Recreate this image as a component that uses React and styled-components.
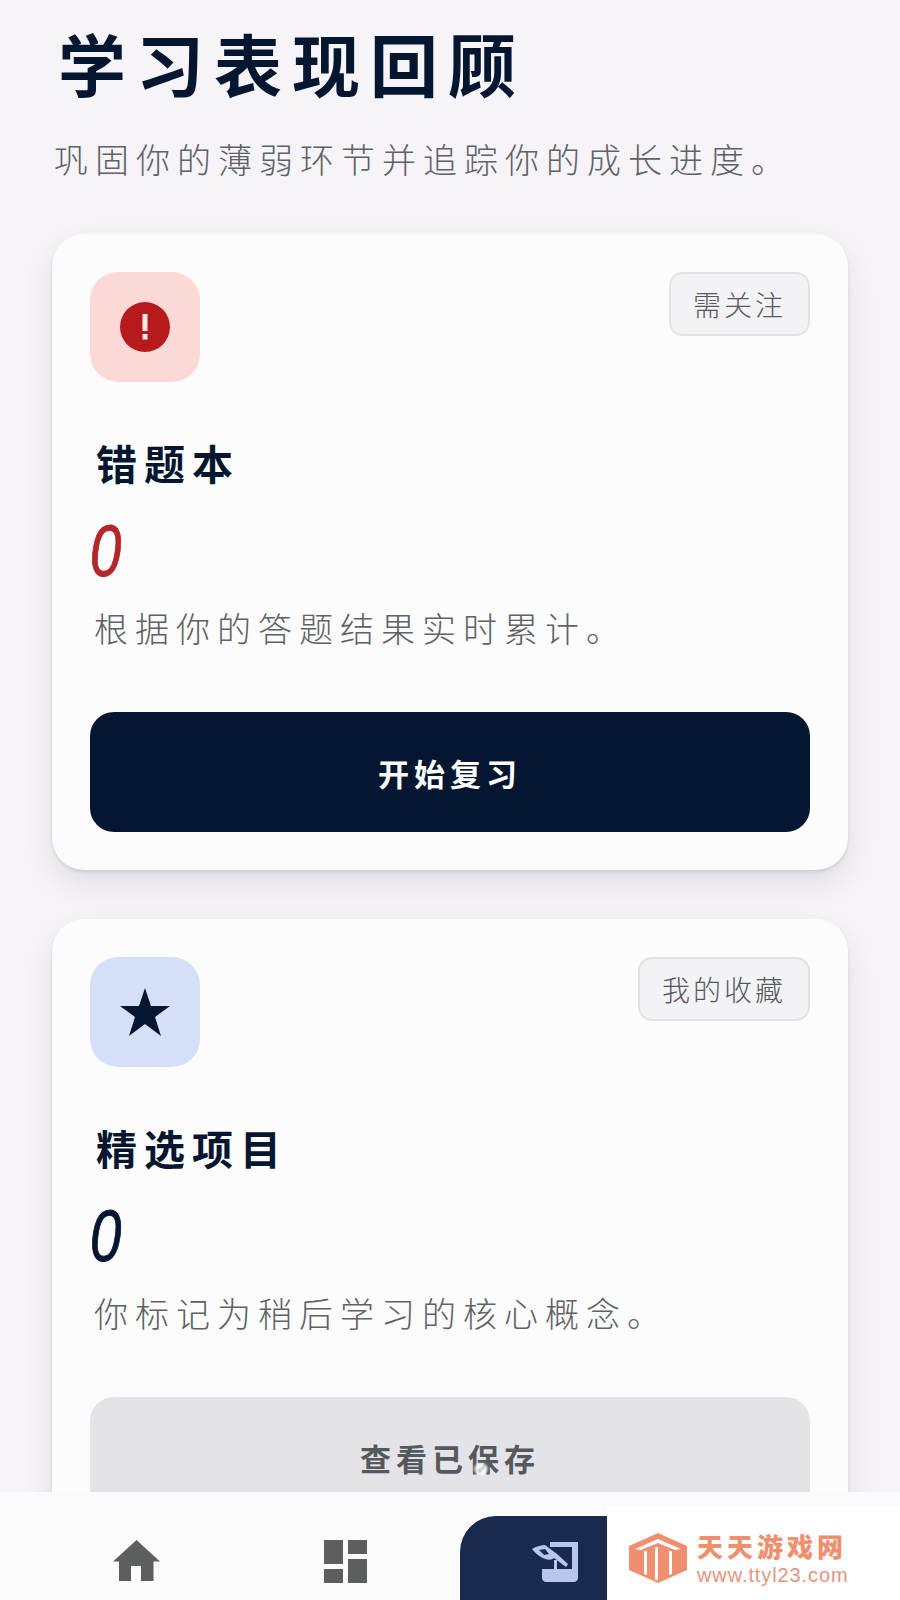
import React from 'react'
import styled, { createGlobalStyle } from 'styled-components'

const GlobalStyle = createGlobalStyle`
  html, body {
    margin: 0;
    padding: 0;
    background: #f6f4f8;
  }
  * {
    box-sizing: border-box;
  }
`

const Screen = styled.div`
  position: relative;
  width: 900px;
  height: 1600px;
  overflow: hidden;
  padding: 17px 52px 0;
  background: #f6f4f8;
  font-family: "Noto Sans CJK SC", "Noto Sans", sans-serif;
`

const PageTitle = styled.h1`
  margin: 0 0 0 6px;
  font-size: 68px;
  line-height: 92px;
  font-weight: 700;
  letter-spacing: 10px;
  color: #041630;
`

const PageSubtitle = styled.p`
  margin: 25px 0 50px 2px;
  font-size: 34px;
  line-height: 50px;
  font-weight: 300;
  letter-spacing: 7px;
  color: #5e6166;
`

const Cards = styled.div`
  display: flex;
  flex-direction: column;
  gap: 49px;
`

const Card = styled.section`
  height: 636px;
  padding: 38px;
  background: #fcfcfd;
  border-radius: 32px;
  box-shadow: 0 2px 3px rgba(30, 30, 50, 0.12), 0 14px 30px rgba(40, 40, 60, 0.1);
`

const CardTop = styled.div`
  display: flex;
  justify-content: space-between;
  align-items: flex-start;
`

const IconBox = styled.div`
  width: 110px;
  height: 110px;
  display: flex;
  align-items: center;
  justify-content: center;
  border-radius: 28px;
  background: ${(p) => p.$bg};
`

const Badge = styled.span`
  height: 64px;
  padding: 0 22px;
  display: flex;
  align-items: center;
  font-size: 28px;
  font-weight: 300;
  letter-spacing: 3px;
  color: #55585d;
  background: #f3f2f5;
  border: 2px solid #e3e2e6;
  border-radius: 14px;
`

const CardTitle = styled.h2`
  margin: 50px 0 0 6px;
  font-size: 41px;
  line-height: 60px;
  font-weight: 700;
  letter-spacing: 7px;
  color: #041630;
`

const Count = styled.div`
  margin: 17px 0 0;
  font-family: "Liberation Sans", sans-serif;
  font-size: 72px;
  line-height: 84px;
  font-style: italic;
  color: ${(p) => p.$color};
  transform: scaleX(0.78);
  transform-origin: left center;
  -webkit-text-stroke: 1px ${(p) => p.$color};
`

const Description = styled.p`
  margin: 10px 0 0 4px;
  font-size: 34px;
  line-height: 50px;
  font-weight: 300;
  letter-spacing: 7px;
  color: #5e6166;
`

const ActionButton = styled.div`
  height: 120px;
  margin-top: 59px;
  display: flex;
  align-items: center;
  justify-content: center;
  font-size: 31px;
  font-weight: 700;
  letter-spacing: 5px;
  border-radius: 24px;
  color: ${(p) => (p.$primary ? '#ffffff' : '#55585d')};
  background: ${(p) => (p.$primary ? '#041630' : '#e4e3e7')};
`

const TouchDot = styled.div`
  position: absolute;
  left: 474px;
  top: 1463px;
  width: 14px;
  height: 12px;
  border-radius: 50%;
  background: rgba(255, 255, 255, 0.75);
  filter: blur(1px);
`

const BottomNav = styled.nav`
  position: absolute;
  left: 0;
  right: 0;
  bottom: 0;
  height: 108px;
  padding-top: 24px;
  display: grid;
  grid-template-columns: 272px 188px 147px 1fr;
  background: #fbfbfc;
`

const NavItem = styled.div`
  display: flex;
  justify-content: center;
  padding-top: 24px;
  color: #5d5f5e;
`

const DashboardNavItem = styled(NavItem)`
  padding-right: 42px;
`

const ActiveNavItem = styled(NavItem)`
  border-radius: 36px 0 0 0;
  padding: 26px 0 0 42px;
  background: #1a2a4c;
  color: #b9c6ec;
`

const Watermark = styled.div`
  position: absolute;
  right: 0;
  bottom: 0;
  width: 293px;
  height: 93px;
  padding: 26px 0 0 22px;
  display: flex;
  gap: 10px;
  background: #ffffff;
`

const WatermarkText = styled.div`
  display: flex;
  flex-direction: column;
  color: #ef8f6d;
`

const WatermarkName = styled.span`
  font-size: 26px;
  line-height: 26px;
  font-weight: 900;
  letter-spacing: 4px;
`

const WatermarkUrl = styled.span`
  margin-top: 5px;
  font-family: "Liberation Sans", sans-serif;
  font-size: 20px;
  line-height: 23px;
  letter-spacing: 0.9px;
  color: #e59580;
`

function AlertIcon() {
  return (
    <svg width="50" height="50" viewBox="0 0 50 50">
      <circle cx="25" cy="25" r="25" fill="#b71a1c" />
      <rect x="22.5" y="12" width="5" height="17" fill="#fbe9e7" />
      <rect x="22.5" y="32" width="5" height="5.5" fill="#fbe9e7" />
    </svg>
  )
}

function StarIcon() {
  return (
    <svg width="50" height="48" viewBox="0 0 50 48">
      <path d="M25 0l6 18h19L35 29l6 19-16-12L9 48l6-19L0 18h19z" fill="#041630" />
    </svg>
  )
}

function HomeIcon() {
  return (
    <svg width="47" height="41" viewBox="0 0 47 41" fill="currentColor">
      <path d="M23.5 0L47 21.5h-6.5V41H28V26H18v15H6V21.5H0z" />
    </svg>
  )
}

function DashboardIcon() {
  return (
    <svg width="43" height="43" viewBox="0 0 43 43" fill="currentColor">
      <rect width="19" height="24" />
      <rect x="24" width="19" height="14" />
      <rect y="29" width="19" height="14" />
      <rect x="24" y="19" width="19" height="24" />
    </svg>
  )
}

function ReviewIcon() {
  return (
    <svg width="46" height="40" viewBox="0 0 46 40" fill="currentColor">
      <path d="M18 0h28v36c0 2-2 4-4 4H14c-2 0-4-2-4-4v-9h30V5H18z" />
      <path d="M0 7C5 4 10 3 13 3l12 9 11 10-2 3-12-9C18 20 8 17 0 7z" />
      <path d="M7 8l6-1 4 5-5 1z" fill="#1a2a4c" />
      <rect x="22" y="18" width="3" height="10" />
    </svg>
  )
}

function WatermarkLogo() {
  return (
    <svg width="58" height="50" viewBox="0 0 58 50">
      <path d="M29 0L58 13v24L29 50 0 37V13z" fill="#ef8f6d" />
      <path d="M6 16l23-10 23 10-6 1-17-7-17 7z" fill="#fff" />
      <path d="M15 18h3v24l-3-1zM26 14h3v33h-3zM40 18h3v23l-3 1z" fill="#fff" />
    </svg>
  )
}

export default function App() {
  return (
    <Screen>
      <GlobalStyle />
      <PageTitle>学习表现回顾</PageTitle>
      <PageSubtitle>巩固你的薄弱环节并追踪你的成长进度。</PageSubtitle>
      <Cards>
        <Card>
          <CardTop>
            <IconBox $bg="#fbd9d6">
              <AlertIcon />
            </IconBox>
            <Badge>需关注</Badge>
          </CardTop>
          <CardTitle>错题本</CardTitle>
          <Count $color="#b3272b">0</Count>
          <Description>根据你的答题结果实时累计。</Description>
          <ActionButton $primary>开始复习</ActionButton>
        </Card>
        <Card>
          <CardTop>
            <IconBox $bg="#d5dff8">
              <StarIcon />
            </IconBox>
            <Badge>我的收藏</Badge>
          </CardTop>
          <CardTitle>精选项目</CardTitle>
          <Count $color="#041630">0</Count>
          <Description>你标记为稍后学习的核心概念。</Description>
          <ActionButton>查看已保存</ActionButton>
        </Card>
      </Cards>
      <TouchDot />
      <BottomNav>
        <NavItem>
          <HomeIcon />
        </NavItem>
        <DashboardNavItem>
          <DashboardIcon />
        </DashboardNavItem>
        <ActiveNavItem>
          <ReviewIcon />
        </ActiveNavItem>
      </BottomNav>
      <Watermark>
        <WatermarkLogo />
        <WatermarkText>
          <WatermarkName>天天游戏网</WatermarkName>
          <WatermarkUrl>www.ttyl23.com</WatermarkUrl>
        </WatermarkText>
      </Watermark>
    </Screen>
  )
}
